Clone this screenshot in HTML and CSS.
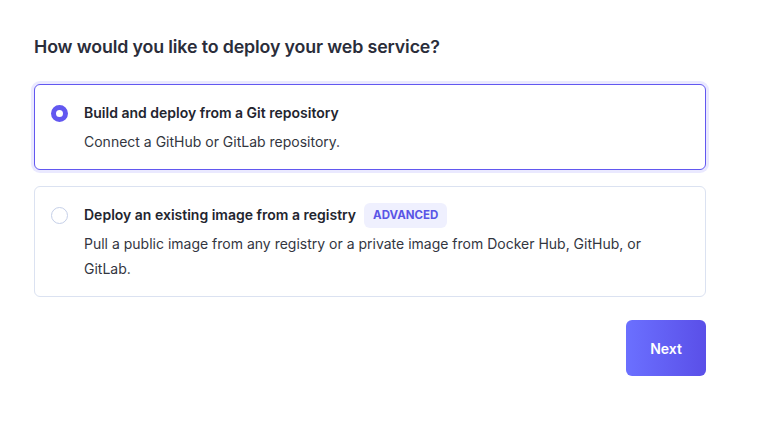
FILE: index.html
```html
<!DOCTYPE html>
<html lang="en">
<head>
<meta charset="utf-8">
<title>Deploy web service</title>
<link rel="stylesheet" href="styles.css">
</head>
<body>
<main class="page">
  <h1 class="heading">How would you like to deploy your web service?</h1>
  <div class="options">
    <label class="option option--selected">
      <span class="radio radio--checked"></span>
      <span class="option-body">
        <span class="option-title">Build and deploy from a Git repository</span>
        <span class="option-desc">Connect a GitHub or GitLab repository.</span>
      </span>
    </label>
    <label class="option">
      <span class="radio"></span>
      <span class="option-body">
        <span class="option-title">Deploy an existing image from a registry <span class="badge">ADVANCED</span></span>
        <span class="option-desc">Pull a public image from any registry or a private image from Docker Hub, GitHub, or GitLab.</span>
      </span>
    </label>
  </div>
  <div class="actions">
    <button class="btn-next" type="button">Next</button>
  </div>
</main>
</body>
</html>
```
FILE: styles.css
```css
* { box-sizing: border-box; }
html, body { margin: 0; padding: 0; background: #ffffff; }
body {
  font-family: Inter, "Noto Sans", "Liberation Sans", sans-serif;
  color: #23252f;
}
.page {
  width: 706px;
  padding: 35px 0 0 34px;
}
.heading {
  margin: 0;
  font-size: 17.8px;
  line-height: 24px;
  font-weight: 600;
  color: #2a2d3a;
  letter-spacing: -0.13px;
}
.options {
  margin-top: 25px;
  display: flex;
  flex-direction: column;
  gap: 16px;
}
.option {
  display: flex;
  align-items: flex-start;
  gap: 16px;
  padding: 15px 24px 15px 16px;
  border: 1px solid #dbe2f1;
  border-radius: 6px;
  background: #fff;
}
.option--selected {
  border-color: #6258f0;
  box-shadow: 0 0 0 3px rgba(108, 99, 255, 0.14);
}
.radio {
  flex: none;
  width: 17px;
  height: 17px;
  margin-top: 5px;
  border-radius: 50%;
  border: 1px solid #c5cfe8;
  background: #fff;
}
.radio--checked {
  border: 5px solid #6258f0;
}
.option-body {
  display: flex;
  flex-direction: column;
  gap: 3px;
}
.option-title {
  display: flex;
  align-items: center;
  gap: 8px;
  font-size: 14px;
  line-height: 26px;
  font-weight: 600;
  color: #23252f;
}
.option-desc {
  font-size: 14px;
  line-height: 25px;
  color: #33363f;
}
.badge {
  display: inline-block;
  height: 25px;
  line-height: 25px;
  padding: 0 9px;
  border-radius: 6px;
  background: #eff0fe;
  color: #5a55e6;
  font-size: 11.5px;
  font-weight: 700;
  letter-spacing: 0;
}
.actions {
  display: flex;
  justify-content: flex-end;
  margin-top: 23px;
}
.btn-next {
  width: 80px;
  height: 56px;
  border: none;
  border-radius: 6px;
  background: linear-gradient(90deg, #6b70ff 0%, #5a4fe8 100%);
  color: #fff;
  font-family: inherit;
  font-size: 14px;
  font-weight: 600;
  cursor: pointer;
}
```
